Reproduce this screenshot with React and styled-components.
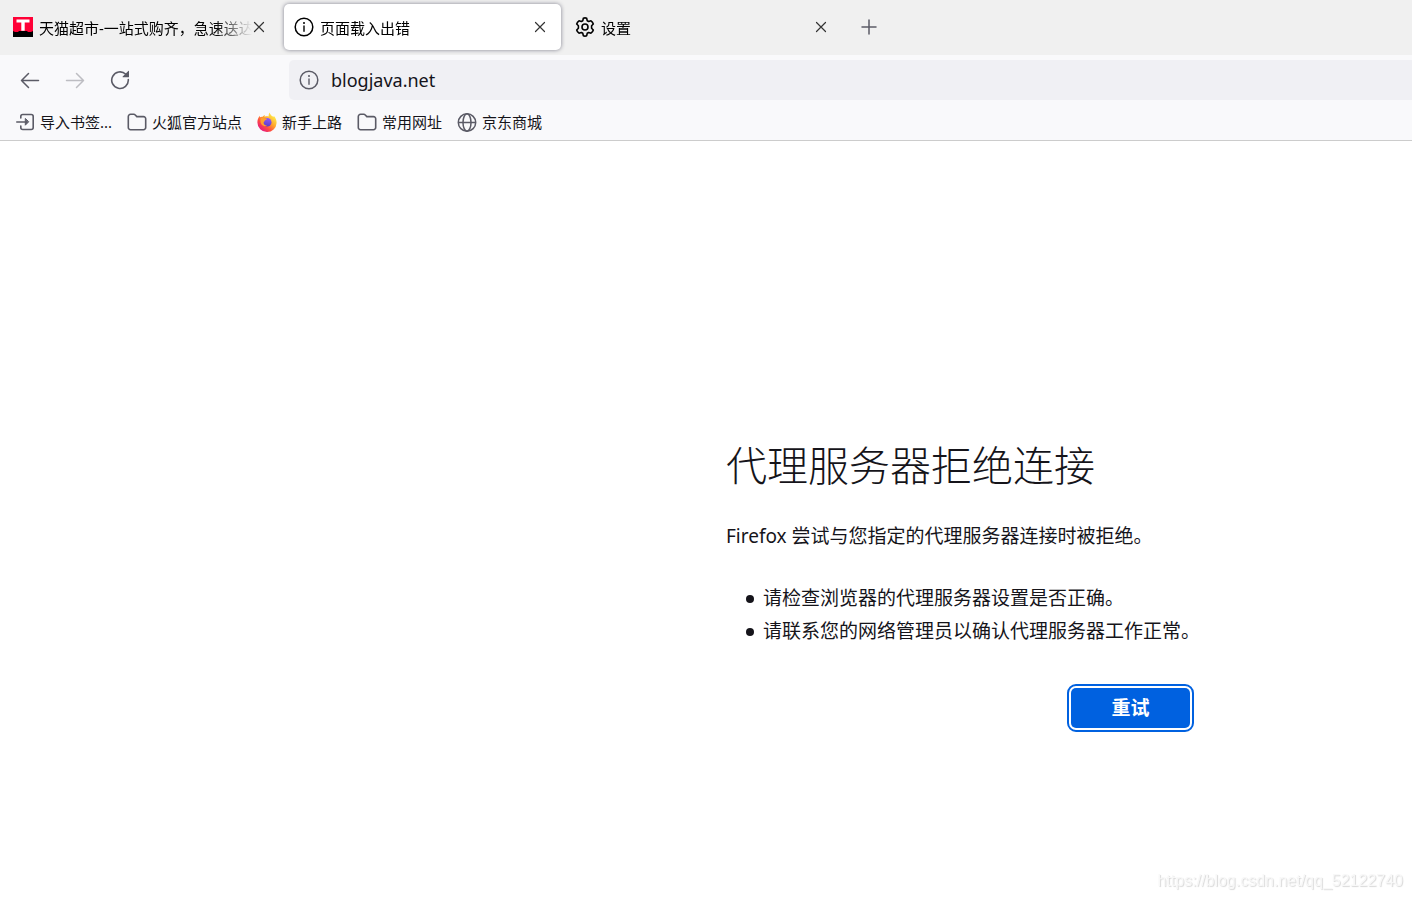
import styled, { createGlobalStyle } from "styled-components";

// CSS
const GlobalStyle = createGlobalStyle`
  * {
    box-sizing: border-box;
  }

  body {
    margin: 0;
    background-color: #fff;
    color: #15141a;
    font-family: "Noto Sans", "Noto Sans CJK SC", sans-serif;
    font-size: 15px;
  }

  button,
  input {
    font: inherit;
    color: inherit;
    border: 0;
    padding: 0;
    background: none;
  }

  svg {
    display: block;
    flex: none;
  }
`;

const Window = styled.div`
  display: flex;
  flex-direction: column;
  min-height: 100vh;
  overflow: hidden;
`;

const TabBar = styled.div`
  display: flex;
  align-items: center;
  gap: 4px;
  padding: 4px 3px 5px;
  background-color: #f0f0f0;
`;

const Tab = styled.div`
  display: flex;
  align-items: center;
  flex: 0 1 277px;
  min-width: 0;
  height: 46px;
  padding: 0 14px 0 10px;
  border-radius: 5px;
  color: #000;
  background-color: ${({ $active }) => ($active ? "#fff" : "transparent")};
  box-shadow: ${({ $active }) => ($active ? "0 0 4px #80808e" : "none")};
`;

const TabTitle = styled.button`
  flex: 1;
  min-width: 0;
  display: flex;
  align-items: center;
  gap: 6px;
  height: 100%;
  overflow: hidden;
  white-space: nowrap;
  text-align: left;
  mask-image: linear-gradient(to left, transparent, #000 36px);
`;

const IconButton = styled.button`
  display: flex;
  align-items: center;
  justify-content: center;
  width: ${({ $size }) => $size}px;
  height: ${({ $size }) => $size}px;
  color: ${({ $color }) => $color || "#5b5b66"};
`;

const NavBar = styled.div`
  display: flex;
  align-items: center;
  height: 50px;
  padding-left: 10px;
  background-color: #f9f9fb;
`;

const NavButtons = styled.div`
  display: flex;
  gap: 5px;
  width: 279px;
`;

const UrlBar = styled.label`
  flex: 1;
  display: flex;
  align-items: center;
  gap: 12px;
  height: 40px;
  padding-left: 10px;
  border-radius: 5px 0 0 5px;
  background-color: #f0f0f4;
  color: #5b5b66;
`;

const UrlInput = styled.input`
  flex: 1;
  min-width: 0;
  font-size: 18px;
  color: #15141a;
  outline: none;
`;

const BookmarkBar = styled.nav`
  display: flex;
  align-items: center;
  gap: 15px;
  height: 36px;
  padding: 0 0 2px 15px;
  background-color: #f9f9fb;
  border-bottom: 1px solid #ccc;
`;

const Bookmark = styled.a`
  display: flex;
  align-items: center;
  gap: 5px;
  color: #15141a;
  text-decoration: none;
  white-space: nowrap;

  svg {
    color: #5b5b66;
  }
`;

const Page = styled.main`
  flex: 1;
  display: flex;
  justify-content: flex-end;
  padding: 292px 222px 40px 20px;
`;

const ErrorBox = styled.section`
  width: 464px;
  font-size: 19px;
  line-height: 33px;
  white-space: nowrap;
`;

const ErrorTitle = styled.h1`
  margin: 0 0 27px;
  font-family: "Noto Sans CJK SC", sans-serif;
  font-size: 41px;
  font-weight: 300;
  line-height: 60px;
`;

const ErrorText = styled.p`
  margin: 0 0 29px;
`;

const ErrorList = styled.ul`
  margin: 0 0 40px;
  padding-left: 20px;
  list-style: none;
`;

const ErrorItem = styled.li`
  display: flex;
  align-items: center;
  gap: 9px;

  &::before {
    content: "";
    flex: none;
    width: 8px;
    height: 8px;
    border-radius: 50%;
    background-color: #15141a;
  }
`;

const Actions = styled.div`
  display: flex;
  justify-content: flex-end;
`;

const RetryButton = styled.button`
  width: 119px;
  height: 40px;
  border-radius: 5px;
  background-color: #0061e0;
  color: #fff;
  font-weight: 700;
  outline: 2px solid #0061e0;
  outline-offset: 2px;
`;

const Watermark = styled.span`
  position: fixed;
  right: 9px;
  bottom: 9px;
  font-family: "Liberation Sans", sans-serif;
  font-size: 16px;
  color: #f8f8f8;
  text-shadow: 1px 1px 1px #d8d8d8;
`;

// Icons
const TmallIcon = () => (
  <svg width="20" height="20" viewBox="0 0 20 20">
    <path fill="#ff0036" d="M0 0h20v20H0z" />
    <path fill="#000" d="M0 14l2 1h3l1-1h8l1 1h3l2-1v6H0z" />
    <path fill="#fff" d="M3.5 2.5h13v3h-4.8v8.2H8.3V5.500H3.500z" />
  </svg>
);

const InfoIcon = () => (
  <svg width="20" height="20" viewBox="0 0 20 20" fill="none" stroke="currentColor">
    <circle cx="10" cy="10" r="8.800" strokeWidth="1.500" />
    <path strokeWidth="1.400" strokeLinecap="round" d="M10 9v5.200" />
    <circle cx="10" cy="6" r="1" fill="currentColor" stroke="none" />
  </svg>
);

const GearIcon = () => (
  <svg width="20" height="20" viewBox="0 0 20 20" fill="none" stroke="currentColor" strokeWidth="1.6" strokeLinejoin="round">
    <circle cx="10" cy="10" r="3" />
    <path d="M8.300 1.300Q10 .5 11.700 1.300L12.200 3.700 13.700 4.500 16 3.800Q17.700 4.900 18.300 7L16.600 8.700v2.600l1.700 1.700Q17.700 15.100 16 16.200l-2.300-.7-1.500.8-.5 2.400Q10 19.500 8.300 18.700L7.800 16.300l-1.500-.8-2.300.7Q2.300 15.100 1.700 13l1.700-1.700V8.700L1.700 7Q2.300 4.900 4 3.800l2.300.7 1.500-.8z" />
  </svg>
);

const CloseIcon = () => (
  <svg width="12" height="12" viewBox="0 0 12 12" fill="none" stroke="currentColor" strokeWidth="1.2" strokeLinecap="round">
    <path d="M1.500 1.500l9 9M10.500 1.500l-9 9" />
  </svg>
);

const PlusIcon = () => (
  <svg width="16" height="16" viewBox="0 0 16 16" fill="none" stroke="currentColor" strokeWidth="1.500" strokeLinecap="round">
    <path d="M8 1v14M1 8h14" />
  </svg>
);

const ArrowIcon = ({ forward }) => (
  <svg width="20" height="20" viewBox="0 0 20 20" fill="none" stroke="currentColor" strokeWidth="1.500" strokeLinecap="round" strokeLinejoin="round">
    {forward ? <path d="M1.500 10.500h17M11.500 3.500l7 7-7 7" /> : <path d="M18.500 10.500h-17M8.500 3.500l-7 7 7 7" />}
  </svg>
);

const ReloadIcon = () => (
  <svg width="20" height="20" viewBox="0 0 20 20">
    <path fill="none" stroke="currentColor" strokeWidth="1.600" strokeLinecap="round" d="M18.300 9.500A8.300 8.300 0 1 1 15.800 4.200" />
    <path fill="currentColor" d="M19 1.200v5.500a.6.6 0 0 1-.6.6h-5.400a.4.4 0 0 1-.3-.7l5.600-5.700a.4.4 0 0 1 .7.300z" />
  </svg>
);

const ImportIcon = () => (
  <svg width="20" height="20" viewBox="0 0 20 20" fill="none" stroke="currentColor" strokeWidth="1.600" strokeLinecap="round" strokeLinejoin="round">
    <path d="M5.800 6V4.500a2 2 0 0 1 2-2h8.400a2 2 0 0 1 2 2v11a2 2 0 0 1-2 2H7.800a2 2 0 0 1-2-2V14" />
    <path d="M1.800 10h9" />
    <path fill="currentColor" strokeWidth="1" d="M10.300 6.800v6.400l3.200-3.200z" />
  </svg>
);

const FolderIcon = () => (
  <svg width="20" height="20" viewBox="0 0 20 20" fill="none" stroke="currentColor" strokeWidth="1.600" strokeLinejoin="round">
    <path d="M1.300 15.500v-11a2.200 2.200 0 0 1 2.200-2.200h3.300a2 2 0 0 1 1.500.7l1.500 1.600h6.700a2.200 2.200 0 0 1 2.200 2.200v8.700a2.200 2.200 0 0 1-2.200 2.200h-13a2.200 2.200 0 0 1-2.200-2.200z" />
  </svg>
);

const GlobeIcon = () => (
  <svg width="20" height="20" viewBox="0 0 20 20" fill="none" stroke="currentColor" strokeWidth="1.500">
    <circle cx="10" cy="10.500" r="8.700" />
    <ellipse cx="10" cy="10.500" rx="4" ry="8.700" />
    <path d="M1.300 10.500h17.400" />
  </svg>
);

const FirefoxIcon = () => (
  <svg width="20" height="20" viewBox="0 0 20 20">
    <defs>
      <linearGradient id="flame" x1=".85" y1=".1" x2=".15" y2=".9">
        <stop offset="0" stopColor="#fff44f" />
        <stop offset=".4" stopColor="#ffa72b" />
        <stop offset=".7" stopColor="#ff4a41" />
        <stop offset="1" stopColor="#e31587" />
      </linearGradient>
      <linearGradient id="globe" x1=".6" y1="0" x2=".4" y2="1">
        <stop offset="0" stopColor="#9059ff" />
        <stop offset="1" stopColor="#5b3bc4" />
      </linearGradient>
    </defs>
    <path fill="url(#flame)" d="M12.700.5c.2 1.700 1.400 2.600 2.500 3.800.6-.1.800.2 1.400.7.200-.4.100-.8.100-1.200 2 1.900 3 4.600 2.900 7.200A9.500 9.500 0 0 1 10 20 9.500 9.500 0 0 1 .4 10.500C.4 8 1.300 5.500 2.800 3.800c0 .7.100 1.100.300 1.500.7-.5 1.600-.7 2.500-.5.500-.9 1.500-1.600 2.400-1.900-.5.700-.6 1.300-.3 1.800 1.200-.6 2.800-.6 4-.2-.1-1.500.1-3 1-4z" />
    <circle cx="10.200" cy="10.300" r="4.300" fill="url(#globe)" />
    <path fill="#ffa02e" d="M3.700 6.300c1.200-.5 2.500-.2 3.600.4.900-.2 2-.1 2.800.3-.1.800-1.900 1-2.300 1.500-.2.900-.8 1.300-1.200 1.900 0 2 1.500 3.200 3.400 2.800-1.800 1.900-5.300.8-6.200-2.100-.4-1.500-.5-3.300-.1-4.800z" />
  </svg>
);

const tabs = [
  { title: "天猫超市-一站式购齐，急速送达", Icon: TmallIcon },
  { title: "页面载入出错", Icon: InfoIcon, active: true },
  { title: "设置", Icon: GearIcon },
];

const bookmarks = [
  { title: "导入书签...", Icon: ImportIcon },
  { title: "火狐官方站点", Icon: FolderIcon },
  { title: "新手上路", Icon: FirefoxIcon },
  { title: "常用网址", Icon: FolderIcon },
  { title: "京东商城", Icon: GlobeIcon },
];

export default function App() {
  return (
    <Window>
      <GlobalStyle />
      <TabBar>
        {tabs.map(({ title, Icon, active }) => (
          <Tab key={title} $active={active}>
            <TabTitle type="button">
              <Icon />
              {title}
            </TabTitle>
            <IconButton type="button" $size={14} $color="#333" aria-label="关闭标签页">
              <CloseIcon />
            </IconButton>
          </Tab>
        ))}
        <IconButton type="button" $size={46} aria-label="新建标签页">
          <PlusIcon />
        </IconButton>
      </TabBar>

      <NavBar>
        <NavButtons>
          <IconButton type="button" $size={40} aria-label="后退">
            <ArrowIcon />
          </IconButton>
          <IconButton type="button" $size={40} $color="#bdbdc2" aria-label="前进" disabled>
            <ArrowIcon forward />
          </IconButton>
          <IconButton type="button" $size={40} aria-label="刷新">
            <ReloadIcon />
          </IconButton>
        </NavButtons>
        <UrlBar>
          <InfoIcon />
          <UrlInput type="text" defaultValue="blogjava.net" aria-label="网址" />
        </UrlBar>
      </NavBar>

      <BookmarkBar>
        {bookmarks.map(({ title, Icon }) => (
          <Bookmark key={title} href="#">
            <Icon />
            {title}
          </Bookmark>
        ))}
      </BookmarkBar>

      <Page>
        <ErrorBox>
          <ErrorTitle>代理服务器拒绝连接</ErrorTitle>
          <ErrorText>Firefox 尝试与您指定的代理服务器连接时被拒绝。</ErrorText>
          <ErrorList>
            <ErrorItem>请检查浏览器的代理服务器设置是否正确。</ErrorItem>
            <ErrorItem>请联系您的网络管理员以确认代理服务器工作正常。</ErrorItem>
          </ErrorList>
          <Actions>
            <RetryButton type="button">重试</RetryButton>
          </Actions>
        </ErrorBox>
      </Page>
      <Watermark>https://blog.csdn.net/qq_52122740</Watermark>
    </Window>
  );
}
